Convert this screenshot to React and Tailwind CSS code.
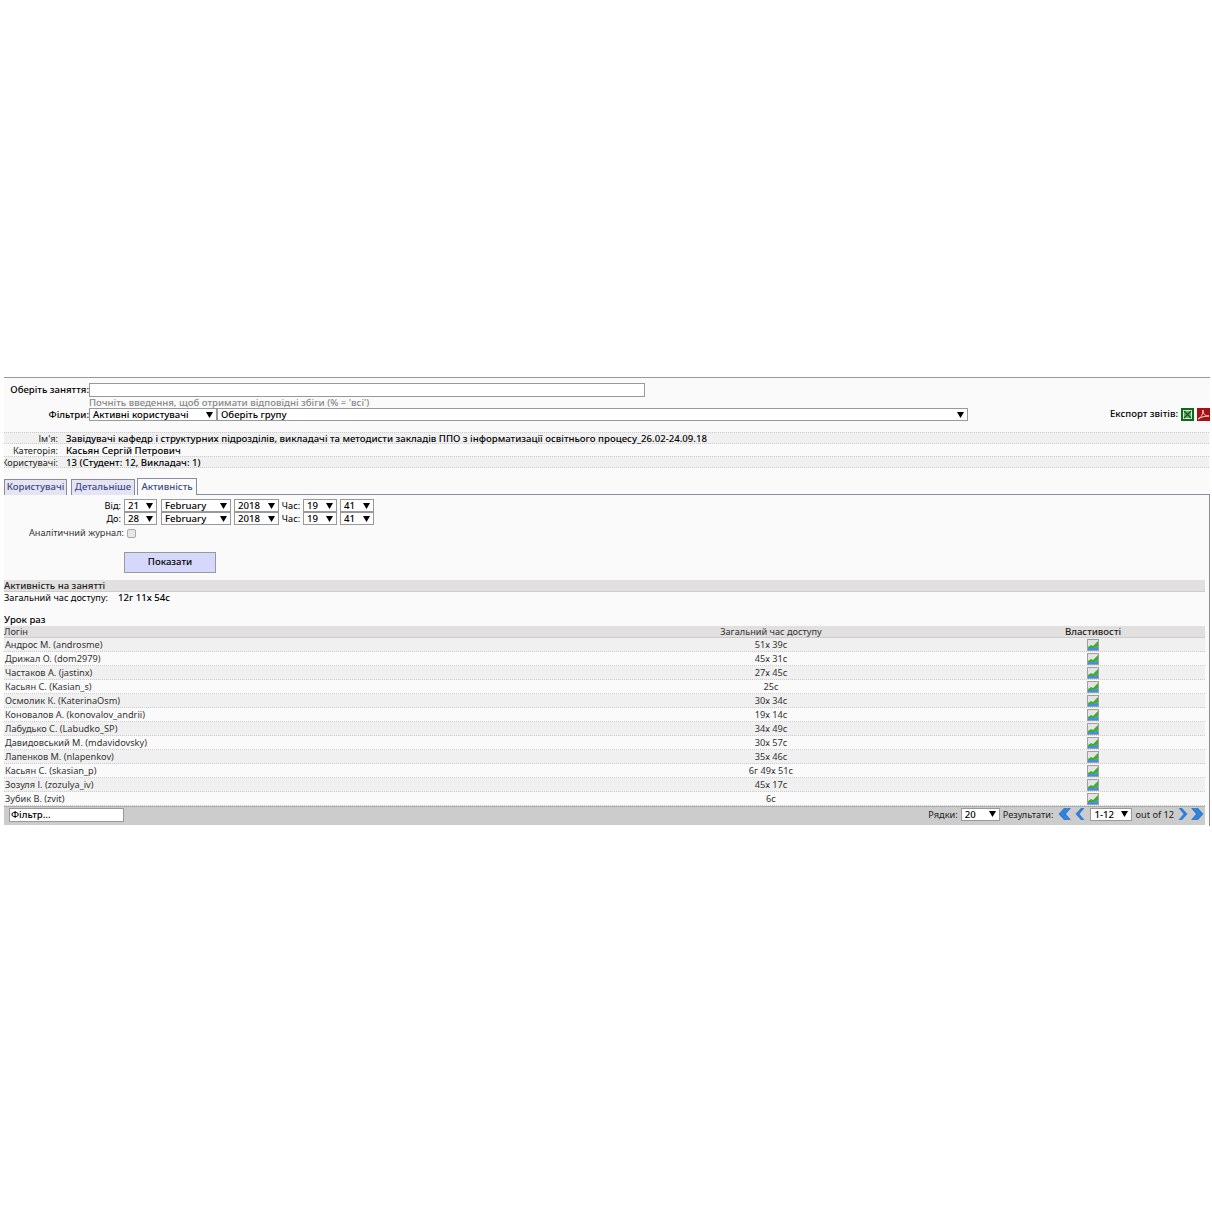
const rows = [
  ["Андрос М. (androsme)", "51х 39с"],
  ["Дрижал О. (dom2979)", "45х 31с"],
  ["Частаков А. (jastinx)", "27х 45с"],
  ["Касьян С. (Kasian_s)", "25с"],
  ["Осмолик К. (KaterinaOsm)", "30х 34с"],
  ["Коновалов А. (konovalov_andrii)", "19х 14с"],
  ["Лабудько С. (Labudko_SP)", "34х 49с"],
  ["Давидовський М. (mdavidovsky)", "30х 57с"],
  ["Лапенков М. (nlapenkov)", "35х 46с"],
  ["Касьян С. (skasian_p)", "6г 49х 51с"],
  ["Зозуля І. (zozulya_iv)", "45х 17с"],
  ["Зубик В. (zvit)", "6с"],
];

const infoRows = [
  ["Ім'я:", "Завідувачі кафедр і структурних підрозділів, викладачі та методисти закладів ППО з інформатизації освітнього процесу_26.02-24.09.18", true],
  ["Категорія:", "Касьян Сергій Петрович", false],
  ["Користувачі:", "13 (Студент: 12, Викладач: 1)", true],
];

function Arrow() {
  return (
    <svg width="7" height="6" viewBox="0 0 7 6">
      <path d="M0 0h7L3.500 6z" fill="#000" />
    </svg>
  );
}

function Select({ value, className }) {
  return (
    <div
      className={`flex items-center justify-between h-[13px] bg-white border border-[#999] pl-[3px] pr-[3px] text-[9.6px] font-medium text-black leading-none ${className}`}
    >
      <span>{value}</span>
      <Arrow />
    </div>
  );
}

function ChartIcon() {
  return (
    <svg width="12" height="12" viewBox="0 0 12 12">
      <rect x="0.5" y="0.5" width="11" height="11" fill="#e4e4e4" stroke="#a0a0a0" />
      <path d="M1 8l3-2 2 1 5-5v5l-3 2H1z" fill="#3fae2a" />
      <path d="M1 9h7l3-2v4H1z" fill="#3f8fe8" />
    </svg>
  );
}

function ExcelIcon() {
  return (
    <svg width="13" height="13" viewBox="0 0 13 13">
      <rect width="13" height="13" fill="#0b6b16" />
      <rect x="2.500" y="2.500" width="8" height="8" fill="#6fa875" stroke="#d9e8da" />
      <path d="M3 3l7 7M10 3l-7 7" stroke="#0b5a13" strokeWidth="1.2" />
    </svg>
  );
}

function PdfIcon() {
  return (
    <svg width="13" height="13" viewBox="0 0 13 13">
      <rect width="13" height="13" fill="#a80f14" />
      <path d="M1 11c3-1 5-5 5-9 0 4 2 6 6 6-4 0-8 1-11 3z" fill="none" stroke="#f4d6d6" strokeWidth="1" />
    </svg>
  );
}

function Chevrons({ double, flip }) {
  return (
    <svg width={double ? 13 : 10} height="12" viewBox={double ? "0 0 13 12" : "0 0 10 12"} className={flip ? "rotate-180" : ""}>
      <path d="M6 0L0.500 6l5.500 6h3.500L4.500 6l5-6z" fill="#2f7fd8" />
      {double && <path d="M9.500 0L4 6l5.500 6H13L8 6l5-6z" fill="#2f7fd8" />}
    </svg>
  );
}

export default function App() {
  return (
    <div className="min-h-[1212px] bg-white pt-[377px] font-['Noto_Sans','DejaVu_Sans',sans-serif] text-[9.2px] text-[#333]">
      <div className="ml-[4px] w-[1206px] h-[448px] bg-[#fafafa] border-t border-[#999]">
        {/* Top filters */}
        <div className="flex items-start pt-[5px] h-[24px]">
          <div className="w-[85px] text-right text-[9.6px] font-medium text-black leading-[14px]">Оберіть заняття:</div>
          <div className="w-[556px] h-[14px] bg-white border border-[#999]" />
        </div>
        <div className="pl-[85px] h-[6px] leading-[1px] text-[9.6px] font-medium text-[#888]">Почніть введення, щоб отримати відповідні збіги (% = 'всі')</div>
        <div className="flex items-center h-[13px]">
          <div className="w-[85px] pt-px text-right text-[9.6px] font-medium text-black">Фільтри:</div>
          <Select value="Активні користувачі" className="w-[128px]" />
          <Select value="Оберіть групу" className="w-[751px]" />
          <div className="ml-auto flex items-center gap-[3px] text-[9.6px] font-medium text-black">
            <span>Експорт звітів:</span>
            <ExcelIcon />
            <PdfIcon />
          </div>
        </div>

        {/* Course info */}
        <div className="mt-[11px] w-[1205px]">
          {infoRows.map(([label, value, shaded]) => (
            <div
              key={label}
              className={`flex h-[12px] leading-[12px] text-[#222] border-dotted border-y ${
                shaded ? "bg-[#f0f0f0] border-[#ccc]" : "border-transparent"
              }`}
            >
              <div className="w-[54px] shrink-0 flex justify-end overflow-x-clip whitespace-nowrap">{label}</div>
              <div className="ml-[8px] text-[9.6px] font-medium text-black">{value}</div>
            </div>
          ))}
        </div>

        {/* Tabs */}
        <div className="flex items-end h-[27px] text-[9.6px] font-medium text-[#3d4a8a]">
          <div className="w-[63px] h-[16px] bg-[#e5e4f2] border border-[#8a8a9e] border-b-0 text-center leading-[14px]">Користувачі</div>
          <div className="ml-[4px] w-[64px] h-[16px] bg-[#e5e4f2] border border-[#8a8a9e] border-b-0 text-center leading-[14px]">Детальніше</div>
          <div className="ml-[2px] w-[60px] h-[17px] bg-[#fafafa] border border-[#8a8a9e] border-b-0 text-center leading-[16px]">Активність</div>
          <div className="flex-1 h-px bg-[#8a8a9e]" />
        </div>

        {/* Activity form */}
        <div className="border-r border-[#8a8a9e] h-[331px]">
          <div className="pt-[4px]">
            {[["Від:", "21"], ["До:", "28"]].map(([label, day]) => (
              <div key={label} className="flex items-center h-[13px] text-black">
                <div className="w-[117px] text-right">{label}</div>
                <Select value={day} className="ml-[3px] w-[33px]" />
                <Select value="February" className="ml-[4px] w-[70px]" />
                <Select value="2018" className="ml-[3px] w-[45px]" />
                <div className="w-[24px] text-center">Час:</div>
                <Select value="19" className="w-[34px]" />
                <Select value="41" className="ml-[3px] w-[34px]" />
              </div>
            ))}
          </div>
          <div className="flex items-center h-[14px] mt-[1px]">
            <div className="w-[120px] text-right">Аналітичний журнал:</div>
            <div className="ml-[3px] w-[9px] h-[9px] rounded-[2px] bg-[#e8e8e8] border border-[#aaa]" />
          </div>
          <button className="block ml-[120px] mt-[12px] w-[92px] h-[21px] bg-[#d5d8fb] border border-[#999] text-[9.6px] font-medium text-black">Показати</button>

          {/* Summary */}
          <div className="w-[1201px] mt-[7px] h-[12px] leading-[12px] bg-[#e2dfdf] border-b border-[#ccc] text-[9.6px] font-medium text-[#222]">Активність на занятті</div>
          <div className="flex h-[12px] leading-[12px] text-black">
            <span className="w-[114px]">Загальний час доступу:</span>
            <span className="text-[9.6px] font-medium">12г 11х 54с</span>
          </div>
          <div className="mt-[10px] h-[12px] leading-[12px] text-[9.6px] font-medium text-black">Урок раз</div>

          {/* Users table */}
          <div className="w-[1201px]">
            <div className="grid grid-cols-[557px_420px_224px] h-[12px] leading-[12px] bg-[#e2dfdf] border-b border-[#ccc]">
              <div>Логін</div>
              <div className="text-center">Загальний час доступу</div>
              <div className="text-center text-[9.6px] font-medium text-[#222]">Властивості</div>
            </div>
            {rows.map(([login, time], i) => (
              <div
                key={login}
                className={`grid grid-cols-[557px_420px_224px] h-[14px] leading-[13px] border-b border-dotted border-[#ccc] ${
                  i % 2 === 0 ? "bg-[#f0f0f0]" : ""
                }`}
              >
                <div className="pl-px">{login}</div>
                <div className="text-center">{time}</div>
                <div className="flex justify-center items-center">
                  <ChartIcon />
                </div>
              </div>
            ))}
            <div className="flex items-center h-[19px] bg-[#ccc] border-t border-[#aaa] pl-[5px] pr-px pb-[3px] text-[#222]">
              <div className="w-[115px] h-[14px] bg-white border border-[#999] pl-px leading-[12px] text-[9.6px] font-medium text-black">Фільтр...</div>
              <div className="ml-auto flex items-center">
                <span>Рядки:</span>
                <Select value="20" className="ml-[3px] w-[39px]" />
                <span className="ml-[3px]">Результати:</span>
                <span className="ml-[5px] flex"><Chevrons double /></span>
                <span className="ml-[4px] flex"><Chevrons /></span>
                <Select value="1-12" className="ml-[5px] w-[42px]" />
                <span className="ml-[3px]">out of 12</span>
                <span className="ml-[4px] flex"><Chevrons flip /></span>
                <span className="ml-[3px] flex"><Chevrons double flip /></span>
              </div>
            </div>
          </div>
        </div>
      </div>
    </div>
  );
}
